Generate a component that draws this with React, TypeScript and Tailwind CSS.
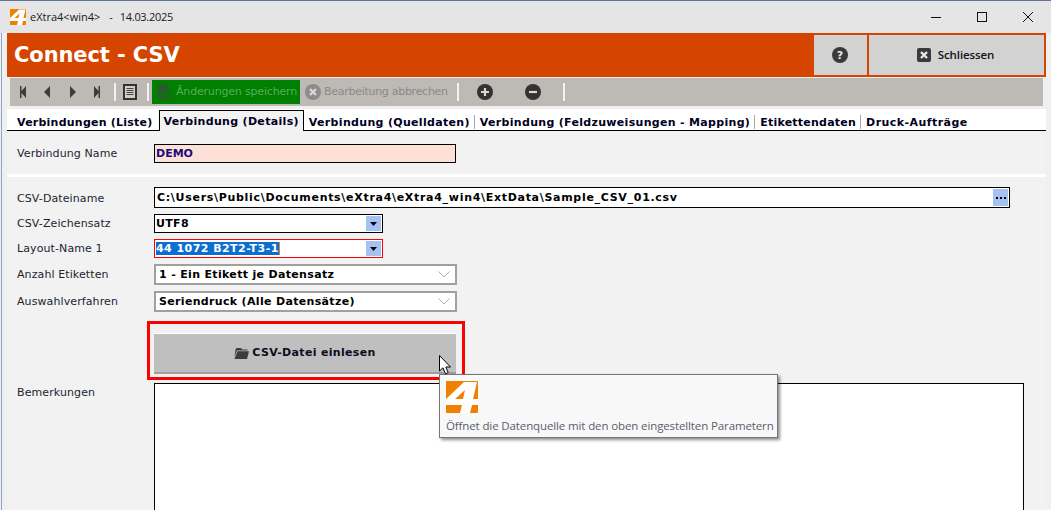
import React from "react";

const dv = "font-['DejaVu_Sans',sans-serif]";
const label = "w-[137px] shrink-0 text-[11px] leading-none text-[#1c2430] font-['DejaVu_Sans',sans-serif] tracking-[0.1px]";
const bold = `text-[11px] font-bold ${dv} tracking-[0.33px]`;

function Logo({ size }: { size: number }) {
  return (
    <svg width={size} height={size} viewBox="0 0 32 32" className="shrink-0">
      <rect width="32" height="32" rx="1" fill="#f08000" />
      <path
        fillRule="evenodd"
        fill="#fff"
        d="M18 1L31 1L27 18L32 18L32 24L26 24L24 32L14 32L16 24L0 24L0 18ZM19 9L9 18L17 18Z"
      />
    </svg>
  );
}

function Sep({ className }: { className: string }) {
  return <div className={`w-[2px] h-[18px] bg-[#f2f2f2] shrink-0 ${className}`} />;
}

function Nav({ d, className }: { d: string; className: string }) {
  return (
    <svg width="6" height="12" viewBox="0 0 6 12" className={`shrink-0 ${className}`}>
      <path d={d} fill="#3c3c3c" />
    </svg>
  );
}

function Combo({ children, invalid }: { children: React.ReactNode; invalid?: boolean }) {
  return (
    <div className={`w-[229px] h-[19px] border bg-white flex items-center pl-[1px] pr-[1px] ${invalid ? "border-[#ff0000]" : "border-black"}`}>
      <div className={`flex-1 ${bold} leading-none text-black`}>{children}</div>
      <div className="w-[15px] h-[15px] bg-[#a6c2f5] flex items-center justify-center">
        <svg width="7" height="4" viewBox="0 0 7 4"><path d="M0 0H7L3.5 4Z" fill="#000" /></svg>
      </div>
    </div>
  );
}

function Select({ children }: { children: React.ReactNode }) {
  return (
    <div className={`w-[303px] h-[21px] border-2 border-[#a0a0a0] bg-white flex items-center pl-[3px] pr-[5px] ${bold} text-black`}>
      <div className="flex-1 pt-[1px]">{children}</div>
      <svg width="12" height="7" viewBox="0 0 12 7"><path d="M0.5 0.5L6 6L11.5 0.5" stroke="#b0b0b0" fill="none" /></svg>
    </div>
  );
}

function Tab({ children, className = "" }: { children: React.ReactNode; className?: string }) {
  return <div className={`text-[11px] font-bold ${dv} text-[#00001e] leading-none whitespace-nowrap ${className}`}>{children}</div>;
}

function TabSep() {
  return <div className="w-[1px] h-[14px] bg-[#a8a8a8] ml-[4px] mr-[5px] shrink-0" />;
}

export default function App() {
  return (
    <div className="relative w-[1051px] h-[510px] overflow-hidden bg-[#f0f0f0] flex flex-col border-t border-t-[#5d7398]">
      <div className="h-[32px] bg-[#e5e5e5] flex items-center pl-[10px] shrink-0 font-['Open_Sans',sans-serif] text-[11px] text-[#1a1a1a]">
        <div className="flex items-center whitespace-pre">
          <Logo size={16} />
          <span className="ml-[4px]">{"eXtra4<win4>"}</span>
          <span className="ml-[9px]">-</span>
          <span className="ml-[7px] tracking-[-0.3px]">14.03.2025</span>
        </div>
        <div className="ml-auto flex items-center text-[#1a1a1a]">
          <svg width="12" height="12" viewBox="0 0 12 12" className="mr-[34px]"><path d="M2 6.5H12" stroke="#111" /></svg>
          <svg width="12" height="12" viewBox="0 0 12 12" className="mr-[35px]"><rect x="2.5" y="1.5" width="9" height="9" stroke="#111" fill="none" /></svg>
          <svg width="12" height="12" viewBox="0 0 12 12" className="mr-[17px]"><path d="M1 1L11 11M11 1L1 11" stroke="#111" /></svg>
        </div>
      </div>

      <div className="flex-1 flex flex-col border-l border-l-[#8fa3c8] ml-[1px] pl-[5px] pr-[5px] min-h-0">
        <div className="h-[44px] bg-[#d64500] flex items-stretch shrink-0 p-[2px]">
          <div className={`flex-1 flex items-center pl-[5px] pt-[2px] text-white text-[21px] font-bold ${dv} tracking-[-0.1px]`}>Connect - CSV</div>
          <div className="w-[53px] bg-[#d2d2d2] flex items-center justify-center mr-[2px]">
            <svg width="16" height="16" viewBox="0 0 16 16" className="-ml-[1px]">
              <circle cx="8" cy="8" r="8" fill="#3a3a3a" />
              <text x="8" y="12" textAnchor="middle" fontSize="11" fontWeight="700" fill="#e8e8e8" fontFamily="DejaVu Sans">?</text>
            </svg>
          </div>
          <div className="w-[175px] bg-[#d2d2d2] flex items-center justify-center gap-[7px] pr-[2px]">
            <svg width="14" height="14" viewBox="0 0 14 14">
              <rect width="14" height="14" rx="2" fill="#3a3a3a" />
              <path d="M4 4L10 10M10 4L4 10" stroke="#e8e8e8" strokeWidth="2.4" />
            </svg>
            <span className="font-['Open_Sans',sans-serif] text-[11.5px] font-semibold text-[#111] tracking-[-0.1px]">Schliessen</span>
          </div>
        </div>

        <div className="h-[28px] mt-[1px] ml-[3px] w-[1033px] bg-[#bdb9b5] flex items-center shrink-0">
          <Nav className="ml-[10px]" d="M0 0H1.5V5L6 0V12L1.5 7V12H0Z" />
          <Nav className="ml-[18px]" d="M6 0V12L0 6Z" />
          <Nav className="ml-[20px]" d="M0 0V12L6 6Z" />
          <Nav className="ml-[18px]" d="M0 0L4.5 5V0H6V12H4.5V7L0 12Z" />
          <Sep className="ml-[14px]" />
          <svg width="14" height="16" viewBox="0 0 14 16" className="ml-[7px] shrink-0">
            <rect x="1" y="1" width="12" height="14" fill="#d0cdca" stroke="#333" strokeWidth="2" />
            <path d="M3.5 4.5H10.5M3.5 6.5H10.5M3.5 8.5H10.5M3.5 10.5H10.5" stroke="#444" strokeWidth="1" />
          </svg>
          <Sep className="ml-[10px]" />
          <div className="ml-[3px] w-[148px] h-[24px] bg-[#008000] flex items-center pl-[5px] text-[#5cab5c] font-['DejaVu_Sans',sans-serif] text-[11px] tracking-[-0.18px] whitespace-nowrap shrink-0">
            <svg width="15" height="16" viewBox="0 0 15 16" className="shrink-0 mr-[4px]">
              <ellipse cx="6" cy="3" rx="6" ry="3" fill="#2c5a2c" />
              <path d="M0 4.5C2 7 10 7 12 4.5V7.5C10 10 2 10 0 7.5ZM0 9C2 11.5 8 11.5 9 11V14.5C6 15 1 14.5 0 12.5Z" fill="#2c5a2c" />
              <circle cx="11.5" cy="12.5" r="3" fill="none" stroke="#2c5a2c" />
              <path d="M11.5 10.8V14.2M9.8 12.5H13.2" stroke="#2c5a2c" />
            </svg>
            <span className="pt-[1px]">Änderungen speichern</span>
          </div>
          <svg width="16" height="16" viewBox="0 0 16 16" className="ml-[5px] shrink-0">
            <circle cx="8" cy="8" r="8" fill="#8c8c8c" />
            <path d="M5 5L11 11M11 5L5 11" stroke="#d8d8d8" strokeWidth="2.4" />
          </svg>
          <div className="ml-[3px] w-[124px] pt-[1px] text-[#8a8a8a] font-['DejaVu_Sans',sans-serif] text-[11px] tracking-[-0.28px] whitespace-nowrap shrink-0">Bearbeitung abbrechen</div>
          <Sep className="ml-[9px]" />
          <svg width="16" height="16" viewBox="0 0 16 16" className="ml-[18px] shrink-0">
            <circle cx="8" cy="8" r="8" fill="#333" />
            <path d="M8 4V12M4 8H12" stroke="#d8d8d8" strokeWidth="2.2" />
          </svg>
          <svg width="16" height="16" viewBox="0 0 16 16" className="ml-[32px] shrink-0">
            <circle cx="8" cy="8" r="8" fill="#333" />
            <path d="M4 8H12" stroke="#d8d8d8" strokeWidth="2.2" />
          </svg>
          <Sep className="ml-[22px]" />
        </div>

        <div className="h-[22px] mt-[3px] bg-white border-b border-b-black flex items-end pl-[10px] shrink-0 relative">
          <div className="h-[16px] flex items-center"><Tab className="mr-[6px] tracking-[0.23px]">Verbindungen (Liste)</Tab></div>
          <div className="h-[21px] -mb-[1px] border border-black border-b-0 bg-[#f2f2f2] flex items-center px-[4px]"><Tab className="tracking-[0.32px]">Verbindung (Details)</Tab></div>
          <div className="h-[16px] flex items-center ml-[5px]">
            <Tab className="tracking-[0.32px]">Verbindung (Quelldaten)</Tab><TabSep />
            <Tab className="tracking-[0.31px]">Verbindung (Feldzuweisungen - Mapping)</Tab><TabSep />
            <Tab className="tracking-[0.23px]">Etikettendaten</Tab><TabSep />
            <Tab className="tracking-[0.45px]">Druck-Aufträge</Tab>
          </div>
        </div>

        <div className="flex-1 flex flex-col bg-[#f2f2f2] min-h-0">
          <div className="flex items-center pl-[10px] mt-[13px] h-[19px]">
            <div className={label}>Verbindung Name</div>
            <div className={`w-[302px] h-[19px] border border-black bg-[#fde1d6] flex items-center pl-[1px] pt-[1px] text-[11px] font-bold ${dv} text-[#1a0a80]`}>DEMO</div>
          </div>
          <div className="h-[3px] bg-white mt-[11px]" />
          <div className="flex items-center pl-[10px] mt-[10px] h-[21px]">
            <div className={`${label} pt-[1px]`}>CSV-Dateiname</div>
            <div className={`w-[856px] h-[21px] border border-black bg-white flex items-center pl-[2px] pr-[1px] text-[11px] font-bold ${dv} text-black tracking-[0.7px]`}>
              <span className="flex-1 pt-[1px]">{"C:\\Users\\Public\\Documents\\eXtra4\\eXtra4_win4\\ExtData\\Sample_CSV_01.csv"}</span>
              <span className="w-[15px] h-[17px] bg-[#a6c2f5] flex items-center justify-center gap-[1px]">
                <i className="w-[2px] h-[2px] bg-black" /><i className="w-[2px] h-[2px] bg-black ml-[1px]" /><i className="w-[2px] h-[2px] bg-black ml-[1px]" />
              </span>
            </div>
          </div>
          <div className="flex items-center pl-[10px] mt-[6px] h-[19px]">
            <div className={label}>CSV-Zeichensatz</div>
            <Combo>UTF8</Combo>
          </div>
          <div className="flex items-center pl-[10px] mt-[6px] h-[19px]">
            <div className={label}>Layout-Name 1</div>
            <Combo invalid><span className="inline-block py-[1px] bg-[#0a6fd0] text-white border-r border-r-[#e08030] tracking-[0.45px]">44 1072 B2T2-T3-1</span></Combo>
          </div>
          <div className="flex items-center pl-[10px] mt-[6px] h-[21px]">
            <div className={label}>Anzahl Etiketten</div>
            <Select>1 - Ein Etikett je Datensatz</Select>
          </div>
          <div className="flex items-center pl-[10px] mt-[6px] h-[21px]">
            <div className={label}>Auswahlverfahren</div>
            <Select>Seriendruck (Alle Datensätze)</Select>
          </div>
          <div className="ml-[147px] mt-[21px] w-[302px] h-[41px] bg-[#bfbfbf] border-t border-t-white border-b-2 border-b-[#a0a0a0] flex items-center justify-center gap-[3px] shrink-0">
            <svg width="15" height="11" viewBox="0 0 15 11" className="shrink-0">
              <path d="M1.5 1.5L2.5 0H7L8 1.5H13.5L13.5 2.5H3L0.5 9ZM3.5 3.2H15L13 11H0.5Z" fill="#3c3c3c" />
            </svg>
            <span className={`${bold} text-[#0c0c1c]`}>CSV-Datei einlesen</span>
          </div>
          <div className="flex items-start pl-[10px] mt-[9px] flex-1 min-h-0">
            <div className={`${label} mt-[4px]`}>Bemerkungen</div>
            <div className="w-[870px] h-[200px] border border-black bg-white shrink-0" />
          </div>
        </div>
      </div>

      {/* annotation frame */}
      <div className="absolute left-[147px] top-[320px] w-[318px] h-[59px] border-[3px] border-[#ff0000]" />

      {/* tooltip */}
      <div className="absolute left-[439px] top-[373px] w-[339px] h-[64px] bg-[#f8f8f8] border border-[#767676] shadow-[2px_2px_3px_rgba(0,0,0,0.45)] pl-[6px] pt-[6px]">
        <Logo size={32} />
        <div className="mt-[7px] font-['Open_Sans',sans-serif] text-[11.5px] leading-none text-[#5c5c6e] tracking-[-0.12px] whitespace-nowrap">Öffnet die Datenquelle mit den oben eingestellten Parametern</div>
      </div>

      {/* mouse pointer */}
      <svg width="13" height="20" viewBox="0 0 13 20" className="absolute left-[439px] top-[354px]">
        <path d="M0.5 0.5V16L4 12.8L6.5 18.8L9.2 17.6L6.8 12H11.5Z" fill="#fff" stroke="#000" strokeWidth="1" />
      </svg>
    </div>
  );
}
